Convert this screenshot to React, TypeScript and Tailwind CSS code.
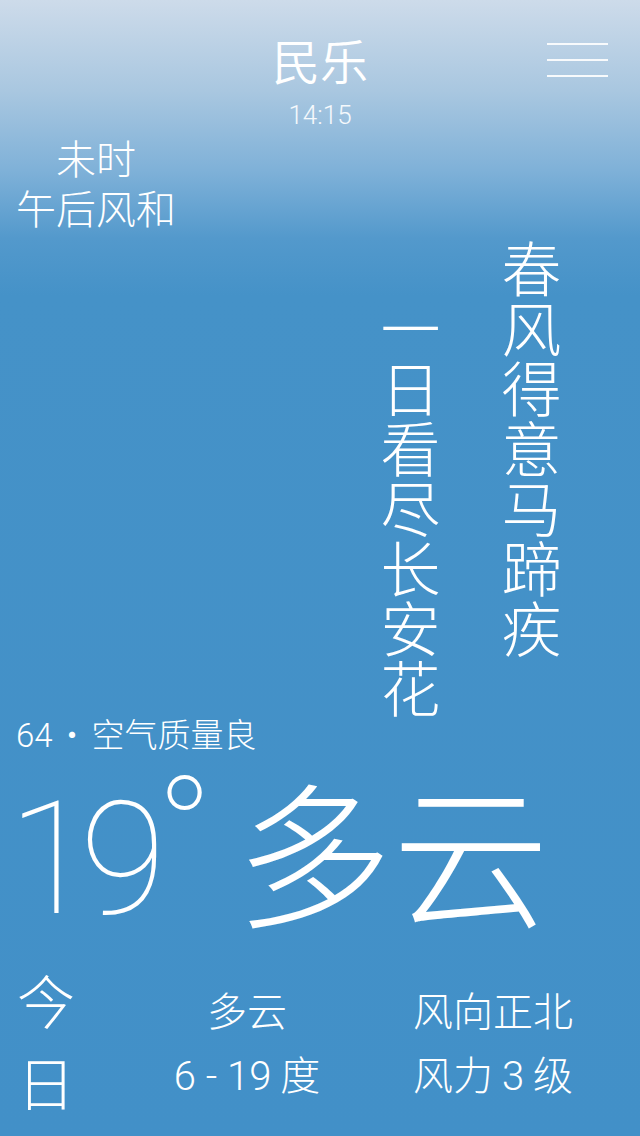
import React from "react";

const cjk = "font-['Noto_Sans_CJK_SC',sans-serif]";

export default function App() {
  return (
    <div
      className={`relative w-[640px] h-[1136px] overflow-hidden flex flex-col text-white bg-[linear-gradient(180deg,#cddbea_0%,#a9c7e0_8%,#7fb1d8_15%,#5399cc_21%,#4592c8_26%,#4290c8_100%)] ${cjk}`}
    >
      {/* header */}
      <div className="grid grid-cols-[1fr_auto_1fr] items-start pt-[35px]">
        <div />
        <div className="flex flex-col items-center">
          <div className="text-[48px] leading-none font-[350]">民乐</div>
          <div className="mt-[19px] text-[26px] leading-none font-light text-white/90 font-['Roboto',sans-serif]">
            14:15
          </div>
        </div>
        <div className="justify-self-end mr-[32px] mt-[8px] flex flex-col gap-[14px]">
          <span className="block w-[61px] h-[2px] bg-white/90" />
          <span className="block w-[61px] h-[2px] bg-white/90" />
          <span className="block w-[61px] h-[2px] bg-white/90" />
        </div>
      </div>

      {/* time of day */}
      <div className="mt-[4px] pl-[16px] w-fit text-center text-[40px] leading-[50px] font-light">
        <div>未时</div>
        <div>午后风和</div>
      </div>

      {/* poem */}
      <div className="mt-[7px] flex flex-row-reverse items-start pr-[79px] gap-[61px] text-[60px] leading-none font-light">
        <div className="[writing-mode:vertical-rl]">春风得意马蹄疾</div>
        <div className="mt-[60px] [writing-mode:vertical-rl]">一日看尽长安花</div>
      </div>

      {/* AQI */}
      <div className="-mt-[2px] pl-[16px] text-[33px] leading-none font-light">
        <span className="font-['Roboto',sans-serif] font-light">64</span>
        <span className="mx-[3px]">·</span>
        <span>空气质量良</span>
      </div>

      {/* big temperature */}
      <div className="mt-[29px] flex items-start pl-[8px]">
        <div className="flex items-start font-['Roboto','Lato',sans-serif] font-thin">
          <span className="text-[157px] leading-none tracking-[-14px]">19</span>
          <span className="text-[150px] leading-none -mt-[24px] ml-[4px]">°</span>
        </div>
        <div className="ml-[22px] -mt-[12px] text-[157px] leading-none font-light">多云</div>
      </div>

      {/* bottom row */}
      <div className="mt-[20px] flex items-start pl-[16px]">
        <div className="w-[60px] flex flex-col items-center text-[58px] leading-[82px] font-light">
          <span>今</span>
          <span>日</span>
        </div>
        <div className="ml-[91px] mt-[19px] w-[160px] flex flex-col items-center text-[40px] leading-[64px] font-light">
          <span>多云</span>
          <span>
            <span className="font-['Roboto',sans-serif] font-light">6 - 19</span> 度
          </span>
        </div>
        <div className="ml-[86px] mt-[19px] w-[160px] flex flex-col items-center text-[40px] leading-[64px] font-light">
          <span>风向正北</span>
          <span>
            风力 <span className="font-['Roboto',sans-serif] font-light">3</span> 级
          </span>
        </div>
      </div>
    </div>
  );
}
